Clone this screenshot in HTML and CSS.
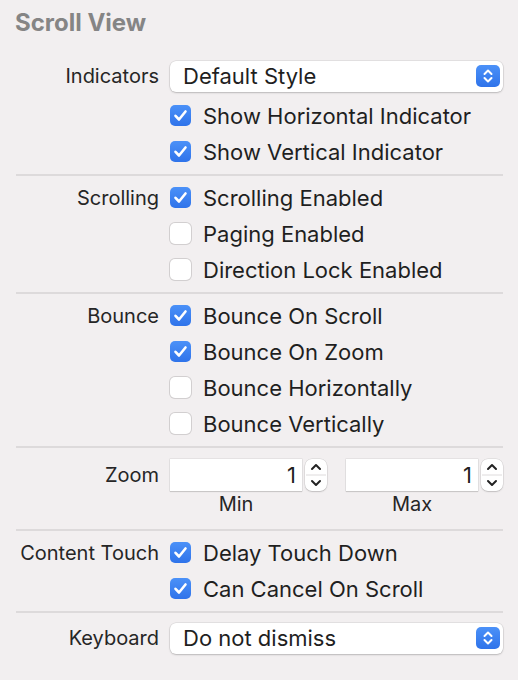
FILE: index.html
```html
<!DOCTYPE html>
<html>
<head>
<meta charset="utf-8">
<link rel="stylesheet" href="styles.css">
</head>
<body>
<div class="panel">
  <div class="title">Scroll View</div>

  <div class="group first-group">
    <div class="label">Indicators</div>
    <div class="popup"><span>Default Style</span><span class="popbtn"><svg viewBox="0 0 24 22" width="24" height="22"><path d="M8.5 9 L12 5.5 L15.5 9 M8.5 13 L12 16.5 L15.5 13" fill="none" stroke="#fff" stroke-width="2" stroke-linecap="round" stroke-linejoin="round"/></svg></span></div>
    <div class="label"></div>
    <div class="check"><span class="box on"><svg viewBox="0 0 21 21" width="21" height="21"><path d="M5.5 10.8 L9 14.5 L15.5 6.5" fill="none" stroke="#fff" stroke-width="2.6" stroke-linecap="round" stroke-linejoin="round"/></svg></span>Show Horizontal Indicator</div>
    <div class="label"></div>
    <div class="check"><span class="box on"><svg viewBox="0 0 21 21" width="21" height="21"><path d="M5.5 10.8 L9 14.5 L15.5 6.5" fill="none" stroke="#fff" stroke-width="2.6" stroke-linecap="round" stroke-linejoin="round"/></svg></span>Show Vertical Indicator</div>
  </div>
  <div class="sep"></div>

  <div class="group">
    <div class="label">Scrolling</div>
    <div class="check"><span class="box on"><svg viewBox="0 0 21 21" width="21" height="21"><path d="M5.5 10.8 L9 14.5 L15.5 6.5" fill="none" stroke="#fff" stroke-width="2.6" stroke-linecap="round" stroke-linejoin="round"/></svg></span>Scrolling Enabled</div>
    <div class="label"></div>
    <div class="check"><span class="box"></span>Paging Enabled</div>
    <div class="label"></div>
    <div class="check"><span class="box"></span>Direction Lock Enabled</div>
  </div>
  <div class="sep"></div>

  <div class="group">
    <div class="label">Bounce</div>
    <div class="check"><span class="box on"><svg viewBox="0 0 21 21" width="21" height="21"><path d="M5.5 10.8 L9 14.5 L15.5 6.5" fill="none" stroke="#fff" stroke-width="2.6" stroke-linecap="round" stroke-linejoin="round"/></svg></span>Bounce On Scroll</div>
    <div class="label"></div>
    <div class="check"><span class="box on"><svg viewBox="0 0 21 21" width="21" height="21"><path d="M5.5 10.8 L9 14.5 L15.5 6.5" fill="none" stroke="#fff" stroke-width="2.6" stroke-linecap="round" stroke-linejoin="round"/></svg></span>Bounce On Zoom</div>
    <div class="label"></div>
    <div class="check"><span class="box"></span>Bounce Horizontally</div>
    <div class="label"></div>
    <div class="check"><span class="box"></span>Bounce Vertically</div>
  </div>
  <div class="sep"></div>

  <div class="group zoom-group">
    <div class="label zoom-label">Zoom</div>
    <div class="zoom">
      <div class="zcol">
        <div class="zfield"><div class="num">1</div><div class="stepper"><svg viewBox="0 0 22 32" width="22" height="32"><path d="M7 10 L11 6 L15 10 M7 22 L11 26 L15 22" fill="none" stroke="#222" stroke-width="2" stroke-linecap="round" stroke-linejoin="round"/><path d="M1 16 H21" stroke="#dedbdc" stroke-width="1"/></svg></div></div>
        <div class="zcap">Min</div>
      </div>
      <div class="zcol">
        <div class="zfield"><div class="num">1</div><div class="stepper"><svg viewBox="0 0 22 32" width="22" height="32"><path d="M7 10 L11 6 L15 10 M7 22 L11 26 L15 22" fill="none" stroke="#222" stroke-width="2" stroke-linecap="round" stroke-linejoin="round"/><path d="M1 16 H21" stroke="#dedbdc" stroke-width="1"/></svg></div></div>
        <div class="zcap">Max</div>
      </div>
    </div>
  </div>
  <div class="sep"></div>

  <div class="group">
    <div class="label">Content Touch</div>
    <div class="check"><span class="box on"><svg viewBox="0 0 21 21" width="21" height="21"><path d="M5.5 10.8 L9 14.5 L15.5 6.5" fill="none" stroke="#fff" stroke-width="2.6" stroke-linecap="round" stroke-linejoin="round"/></svg></span>Delay Touch Down</div>
    <div class="label"></div>
    <div class="check"><span class="box on"><svg viewBox="0 0 21 21" width="21" height="21"><path d="M5.5 10.8 L9 14.5 L15.5 6.5" fill="none" stroke="#fff" stroke-width="2.6" stroke-linecap="round" stroke-linejoin="round"/></svg></span>Can Cancel On Scroll</div>
  </div>
  <div class="sep"></div>

  <div class="group key-group">
    <div class="label">Keyboard</div>
    <div class="popup"><span>Do not dismiss</span><span class="popbtn"><svg viewBox="0 0 24 22" width="24" height="22"><path d="M8.5 9 L12 5.5 L15.5 9 M8.5 13 L12 16.5 L15.5 13" fill="none" stroke="#fff" stroke-width="2" stroke-linecap="round" stroke-linejoin="round"/></svg></span></div>
  </div>
</div>
</body>
</html>
```

FILE: styles.css
```css
html, body {
  margin: 0;
  padding: 0;
  background: #f2eff0;
}
body {
  font-family: Inter, "Noto Sans", sans-serif;
  font-size: 20px;
  color: #222;
  width: 518px;
  height: 680px;
  overflow: hidden;
}
.panel {
  padding: 0 15px 0 0;
}
.title {
  font-weight: 700;
  color: #858585;
  font-size: 24px;
  padding-left: 15px;
  height: 46px;
  line-height: 46px;
  margin-bottom: 8px;
}
.group {
  display: grid;
  grid-template-columns: 159px 1fr;
  column-gap: 11px;
  grid-auto-rows: 36px;
  padding: 4px 0;
  align-items: center;
}
.first-group {
  grid-template-rows: 40px 36px 36px;
}
.first-group .popup {
  margin-bottom: 4px;
}
.first-group .label:first-child {
  margin-bottom: 4px;
}
.label {
  text-align: right;
  color: #262626;
  white-space: nowrap;
  font-size: 20px;
}
.check {
  display: flex;
  align-items: center;
  gap: 12px;
  white-space: nowrap;
  color: #1f1f1f;
  font-size: 22px;
}
.box {
  width: 21px;
  height: 21px;
  border-radius: 5px;
  background: #fff;
  box-shadow: 0 0 0 1px #d2cfd0, 0 1px 1px rgba(0,0,0,0.06);
  box-sizing: border-box;
  flex: none;
  display: block;
  margin-top: -2px;
}
.box svg { display: block; }
.box.on {
  background: linear-gradient(#4b91f8, #2f73ea);
  box-shadow: none;
}
.sep {
  height: 2px;
  background: #dddadb;
  margin-left: 16px;
}
.popup {
  height: 31px;
  background: #fff;
  border-radius: 6px;
  box-shadow: 0 0 0 0.5px rgba(0,0,0,0.12), 0 1px 2px rgba(0,0,0,0.18);
  display: flex;
  align-items: center;
  justify-content: space-between;
  padding: 0 3px 0 13px;
  white-space: nowrap;
  color: #1f1f1f;
  font-size: 22px;
}
.popbtn {
  width: 24px;
  height: 22px;
  border-radius: 5px;
  background: linear-gradient(#4b91f8, #2f73ea);
  display: block;
}
.popbtn svg { display: block; }
.key-group {
  padding-top: 9px;
  grid-auto-rows: 32px;
}
.zoom-group {
  grid-auto-rows: auto;
  padding-top: 11px;
  padding-bottom: 12px;
  align-items: start;
}
.zoom-label {
  line-height: 32px;
}
.zoom {
  display: flex;
  gap: 19px;
}
.zcol {
  flex: 1;
  display: flex;
  flex-direction: column;
}
.zfield {
  display: flex;
  gap: 3px;
  height: 32px;
}
.num {
  flex: 1;
  background: #fff;
  box-shadow: 0 0 0 0.5px rgba(0,0,0,0.1), 0 1px 1px rgba(0,0,0,0.12);
  text-align: right;
  padding-right: 6px;
  line-height: 32px;
  color: #1f1f1f;
  font-size: 22px;
}
.stepper {
  width: 22px;
  height: 32px;
  background: #fff;
  border-radius: 7px;
  box-shadow: 0 0 0 0.5px rgba(0,0,0,0.12), 0 1px 1.5px rgba(0,0,0,0.15);
}
.stepper svg { display: block; }
.zcap {
  line-height: 26px;
  text-align: center;
  padding-right: 25px;
  color: #262626;
}
```
